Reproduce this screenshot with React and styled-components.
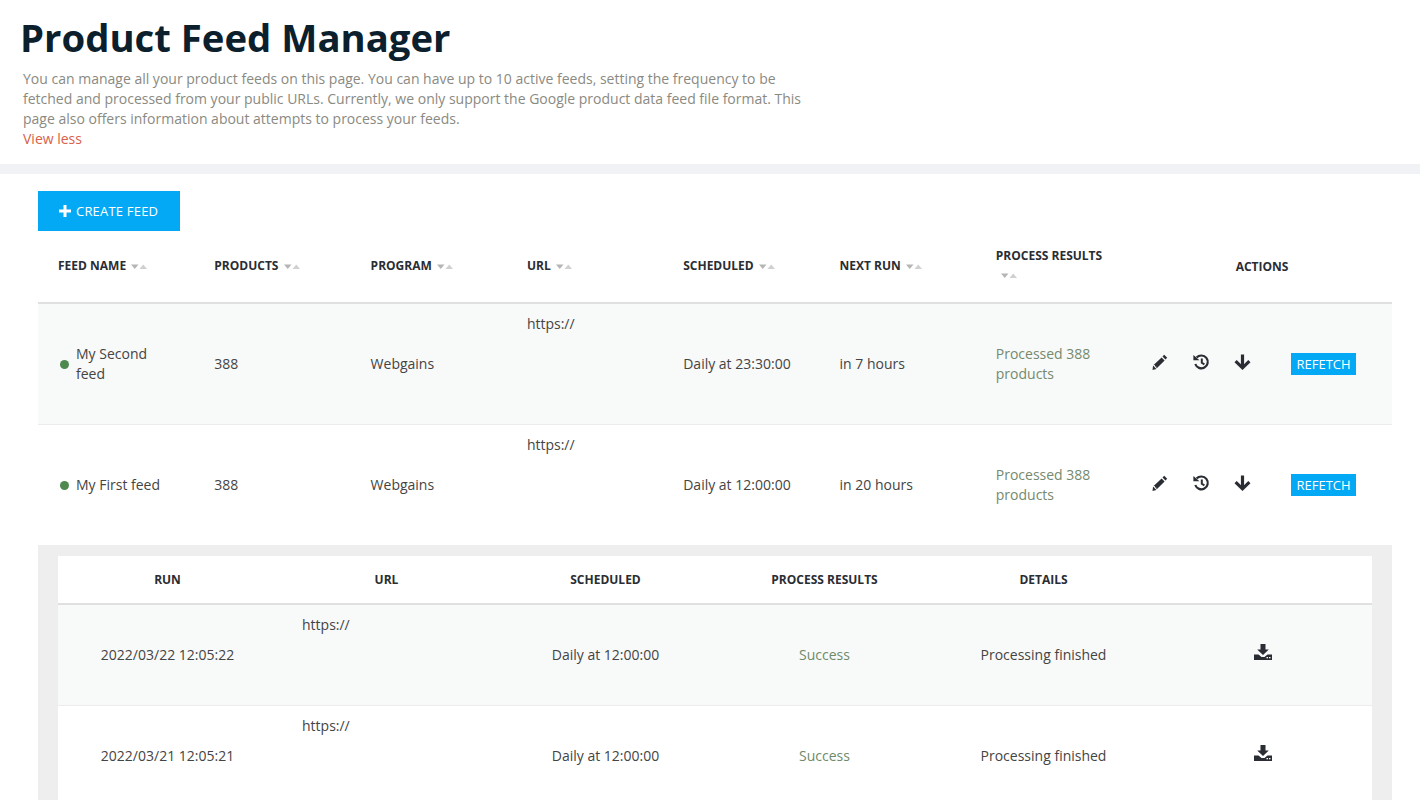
import React from 'react';
import styled, { createGlobalStyle } from 'styled-components';

const Global = createGlobalStyle`
  html, body { margin: 0; padding: 0; background: #fff; height: 800px; overflow: hidden; }
  body { font-family: "Open Sans", "Liberation Sans", sans-serif; font-size: 14px; color: #444; }
`;

const Page = styled.div`width: 1420px; height: 800px; overflow: hidden;`;
const Header = styled.header`
  height: 164px; box-sizing: border-box; padding: 13px 0 0 23px;
`;
const Title = styled.h1`
  margin: 0 0 0 -3px; font-size: 38.3px; line-height: 48px; font-weight: 700; color: #0b202c;
`;
const Description = styled.p`
  margin: 8px 0 0; width: 790px; font-size: 14px; line-height: 20px; color: #8a8a82;
`;
const ViewLess = styled.a`display: block; color: #d9614a; font-size: 14px; line-height: 20px;`;
const Band = styled.div`height: 10px; background: #f0f2f5;`;
const Content = styled.main`padding: 17px 28px 0 38px;`;
const CreateButton = styled.button`
  display: flex; align-items: center; gap: 5px; width: 142px; height: 40px; box-sizing: border-box; padding: 0 0 0 21px;
  border: 0; background: #03a9f4; color: #fff; font: 400 13px "Open Sans", sans-serif; letter-spacing: 0.2px;
`;
const FeedGrid = styled.div`
  display: grid; grid-template-columns: repeat(7, 156.3px) 1fr; align-items: center;
`;
const FeedHead = styled(FeedGrid)`
  margin-top: 15px; height: 34px; padding-bottom: 22px; border-bottom: 2px solid #e0e0e0;
`;
const HeadCell = styled.div`
  padding: 0 10px 0 20px; font-size: 12px; font-weight: 700; color: #2a2d33; line-height: 20px; box-sizing: border-box;
  ${p => p.$center && 'text-align: center; padding: 0; position: relative; top: 1px;'}
`;
const Arrows = styled.span`
  display: inline-block; vertical-align: middle; width: 16px; height: 6px;
  margin-left: ${p => p.$wrapped ? '5px' : '2px'};
  ${p => p.$wrapped && 'position: relative; top: -1px;'}
`;
const FeedRow = styled(FeedGrid)`
  height: 120px; background: ${p => p.$shade ? '#f8f9f9' : '#fff'}; border-bottom: ${p => p.$last ? '0' : '1px solid #ececec'};
`;
const Cell = styled.div`
  padding: 0 20px; line-height: 20px; color: #444; box-sizing: border-box; font-size: 14px;
`;
const NameCell = styled(Cell)`display: flex; align-items: center; padding: 0 25px 0 22px; gap: 7px;`;
const Dot = styled.span`width: 9px; height: 9px; flex: none; border-radius: 50%; background: #4e8a50;`;
const UrlCell = styled(Cell)`align-self: start; padding-top: 10px;`;
const ResultCell = styled(Cell)`color: #75896f; padding-right: 40px;`;
const Actions = styled.div`
  display: flex; align-items: center; padding-left: 20px; height: 100%;
`;
const IconSlot = styled.span`
  display: flex; width: 41px; color: #2a2d33; position: relative; top: -2px;
`;
const Refetch = styled.button`
  margin-left: 16px; width: 65px; height: 22px; border: 0; padding: 0; background: #03a9f4; color: #fff;
  font: 400 13px "Open Sans", sans-serif; white-space: nowrap;
`;
const RunsPanel = styled.section`background: #eeeeee; padding: 11px 20px 0; height: 255px; box-sizing: border-box;`;
const RunsInner = styled.div`background: #fff;`;
const RunsGrid = styled.div`display: grid; grid-template-columns: repeat(6, 219px); align-items: center;`;
const RunsHead = styled(RunsGrid)`height: 47px; border-bottom: 2px solid #e0e0e0;`;
const RunsHeadCell = styled.div`text-align: center; font-size: 12px; font-weight: 700; color: #2a2d33;`;
const RunsRow = styled(RunsGrid)`height: 100px; background: ${p => p.$shade ? '#f8f9f9' : '#fff'}; border-bottom: 1px solid #ececec;`;
const RunsCell = styled.div`text-align: center; color: ${p => p.$ok ? '#6f8a6a' : '#444'}; line-height: 20px;`;
const RunsUrl = styled.div`align-self: start; padding: 10px 0 0 25px; line-height: 20px;`;
const DownloadSlot = styled.div`display: flex; justify-content: center; position: relative; top: -3px; color: #2a2d33;`;

const Sort = ({ wrapped }) => (
  <Arrows $wrapped={wrapped}>
    <svg width="16" height="6" viewBox="0 0 16 6" style={{ display: 'block' }}>
      <path d="M0 0.5h7.5L3.75 5z" fill="#b5b5b5" />
      <path d="M8.5 5h7.5L12.25 0.5z" fill="#d0d0d0" />
    </svg>
  </Arrows>
);

const Plus = () => (
  <svg width="12" height="12" viewBox="0 0 12 12"><path d="M4.5 0h3v4.5H12v3H7.5V12h-3V7.5H0v-3h4.5z" fill="#fff" /></svg>
);
const Pencil = () => (
  <svg width="16" height="16" viewBox="0 0 16 16" fill="currentColor">
    <path d="M12.2.8l3 3-1.7 1.7-3-3zM9.6 3.4l3 3-7.8 7.8-.5-.5v-1.3H2.9v-1.4H1.6z" />
    <path d="M1.1 11.6l3.3 3.3-3.9 1z" />
  </svg>
);
const History = () => (
  <svg width="17" height="17" viewBox="0 0 17 17" fill="none" stroke="currentColor">
    <path d="M3.6 3.6A6.4 6.4 0 1 1 2.3 10" strokeWidth="2.2" />
    <path d="M.4 .9l6 5.3H.4z" fill="currentColor" stroke="none" />
    <path d="M8.8 4.6v4.2L11.4 10.4" strokeWidth="2" />
  </svg>
);
const ArrowDown = () => (
  <svg width="17" height="16" viewBox="0 0 17 16" fill="none" stroke="currentColor" strokeWidth="3.2">
    <path d="M8.5 0.5v12" />
    <path d="M1.6 7.2l6.9 6.6 6.9-6.6" />
  </svg>
);
const Download = () => (
  <svg width="18" height="16" viewBox="0 0 18 16" fill="currentColor">
    <path d="M6.5 0h5v5.5h3.3L9 11 3.2 5.5h3.3z" />
    <path d="M0 10.5h4.5L7.5 13h3l3-2.5H18V16H0z" />
    <rect x="12.5" y="13" width="1.5" height="1.3" fill="#fff" />
    <rect x="15" y="13" width="1.5" height="1.3" fill="#fff" />
  </svg>
);

const feeds = [
  { name: 'My Second feed', at: 'Daily at 23:30:00', next: 'in 7 hours', shade: true },
  { name: 'My First feed', at: 'Daily at 12:00:00', next: 'in 20 hours', last: true },
];
const runs = [
  { run: '2022/03/22 12:05:22', shade: true },
  { run: '2022/03/21 12:05:21' },
];
const heads = ['FEED NAME', 'PRODUCTS', 'PROGRAM', 'URL', 'SCHEDULED', 'NEXT RUN', 'PROCESS RESULTS'];

export default function App() {
  return (
    <Page>
      <Global />
      <Header>
        <Title>Product Feed Manager</Title>
        <Description>
          You can manage all your product feeds on this page. You can have up to 10 active feeds, setting the frequency to be fetched and processed from your public URLs. Currently, we only support the Google product data feed file format. This page also offers information about attempts to process your feeds.
          <ViewLess>View less</ViewLess>
        </Description>
      </Header>
      <Band />
      <Content>
        <CreateButton><Plus />CREATE FEED</CreateButton>
        <FeedHead>
          {heads.map(h => <HeadCell key={h}>{h} <Sort wrapped={h === 'PROCESS RESULTS'} /></HeadCell>)}
          <HeadCell $center>ACTIONS</HeadCell>
        </FeedHead>
        {feeds.map(f => (
          <FeedRow key={f.name} $shade={f.shade} $last={f.last}>
            <NameCell><Dot /><span>{f.name}</span></NameCell>
            <Cell>388</Cell>
            <Cell>Webgains</Cell>
            <UrlCell>https://</UrlCell>
            <Cell>{f.at}</Cell>
            <Cell>{f.next}</Cell>
            <ResultCell>Processed 388 products</ResultCell>
            <Actions>
              <IconSlot><Pencil /></IconSlot>
              <IconSlot><History /></IconSlot>
              <IconSlot><ArrowDown /></IconSlot>
              <Refetch>REFETCH</Refetch>
            </Actions>
          </FeedRow>
        ))}
        <RunsPanel>
          <RunsInner>
            <RunsHead>
              {['RUN', 'URL', 'SCHEDULED', 'PROCESS RESULTS', 'DETAILS', ''].map(h => <RunsHeadCell key={h}>{h}</RunsHeadCell>)}
            </RunsHead>
            {runs.map(r => (
              <RunsRow key={r.run} $shade={r.shade}>
                <RunsCell>{r.run}</RunsCell>
                <RunsUrl>https://</RunsUrl>
                <RunsCell>Daily at 12:00:00</RunsCell>
                <RunsCell $ok>Success</RunsCell>
                <RunsCell>Processing finished</RunsCell>
                <DownloadSlot><Download /></DownloadSlot>
              </RunsRow>
            ))}
          </RunsInner>
        </RunsPanel>
      </Content>
    </Page>
  );
}
